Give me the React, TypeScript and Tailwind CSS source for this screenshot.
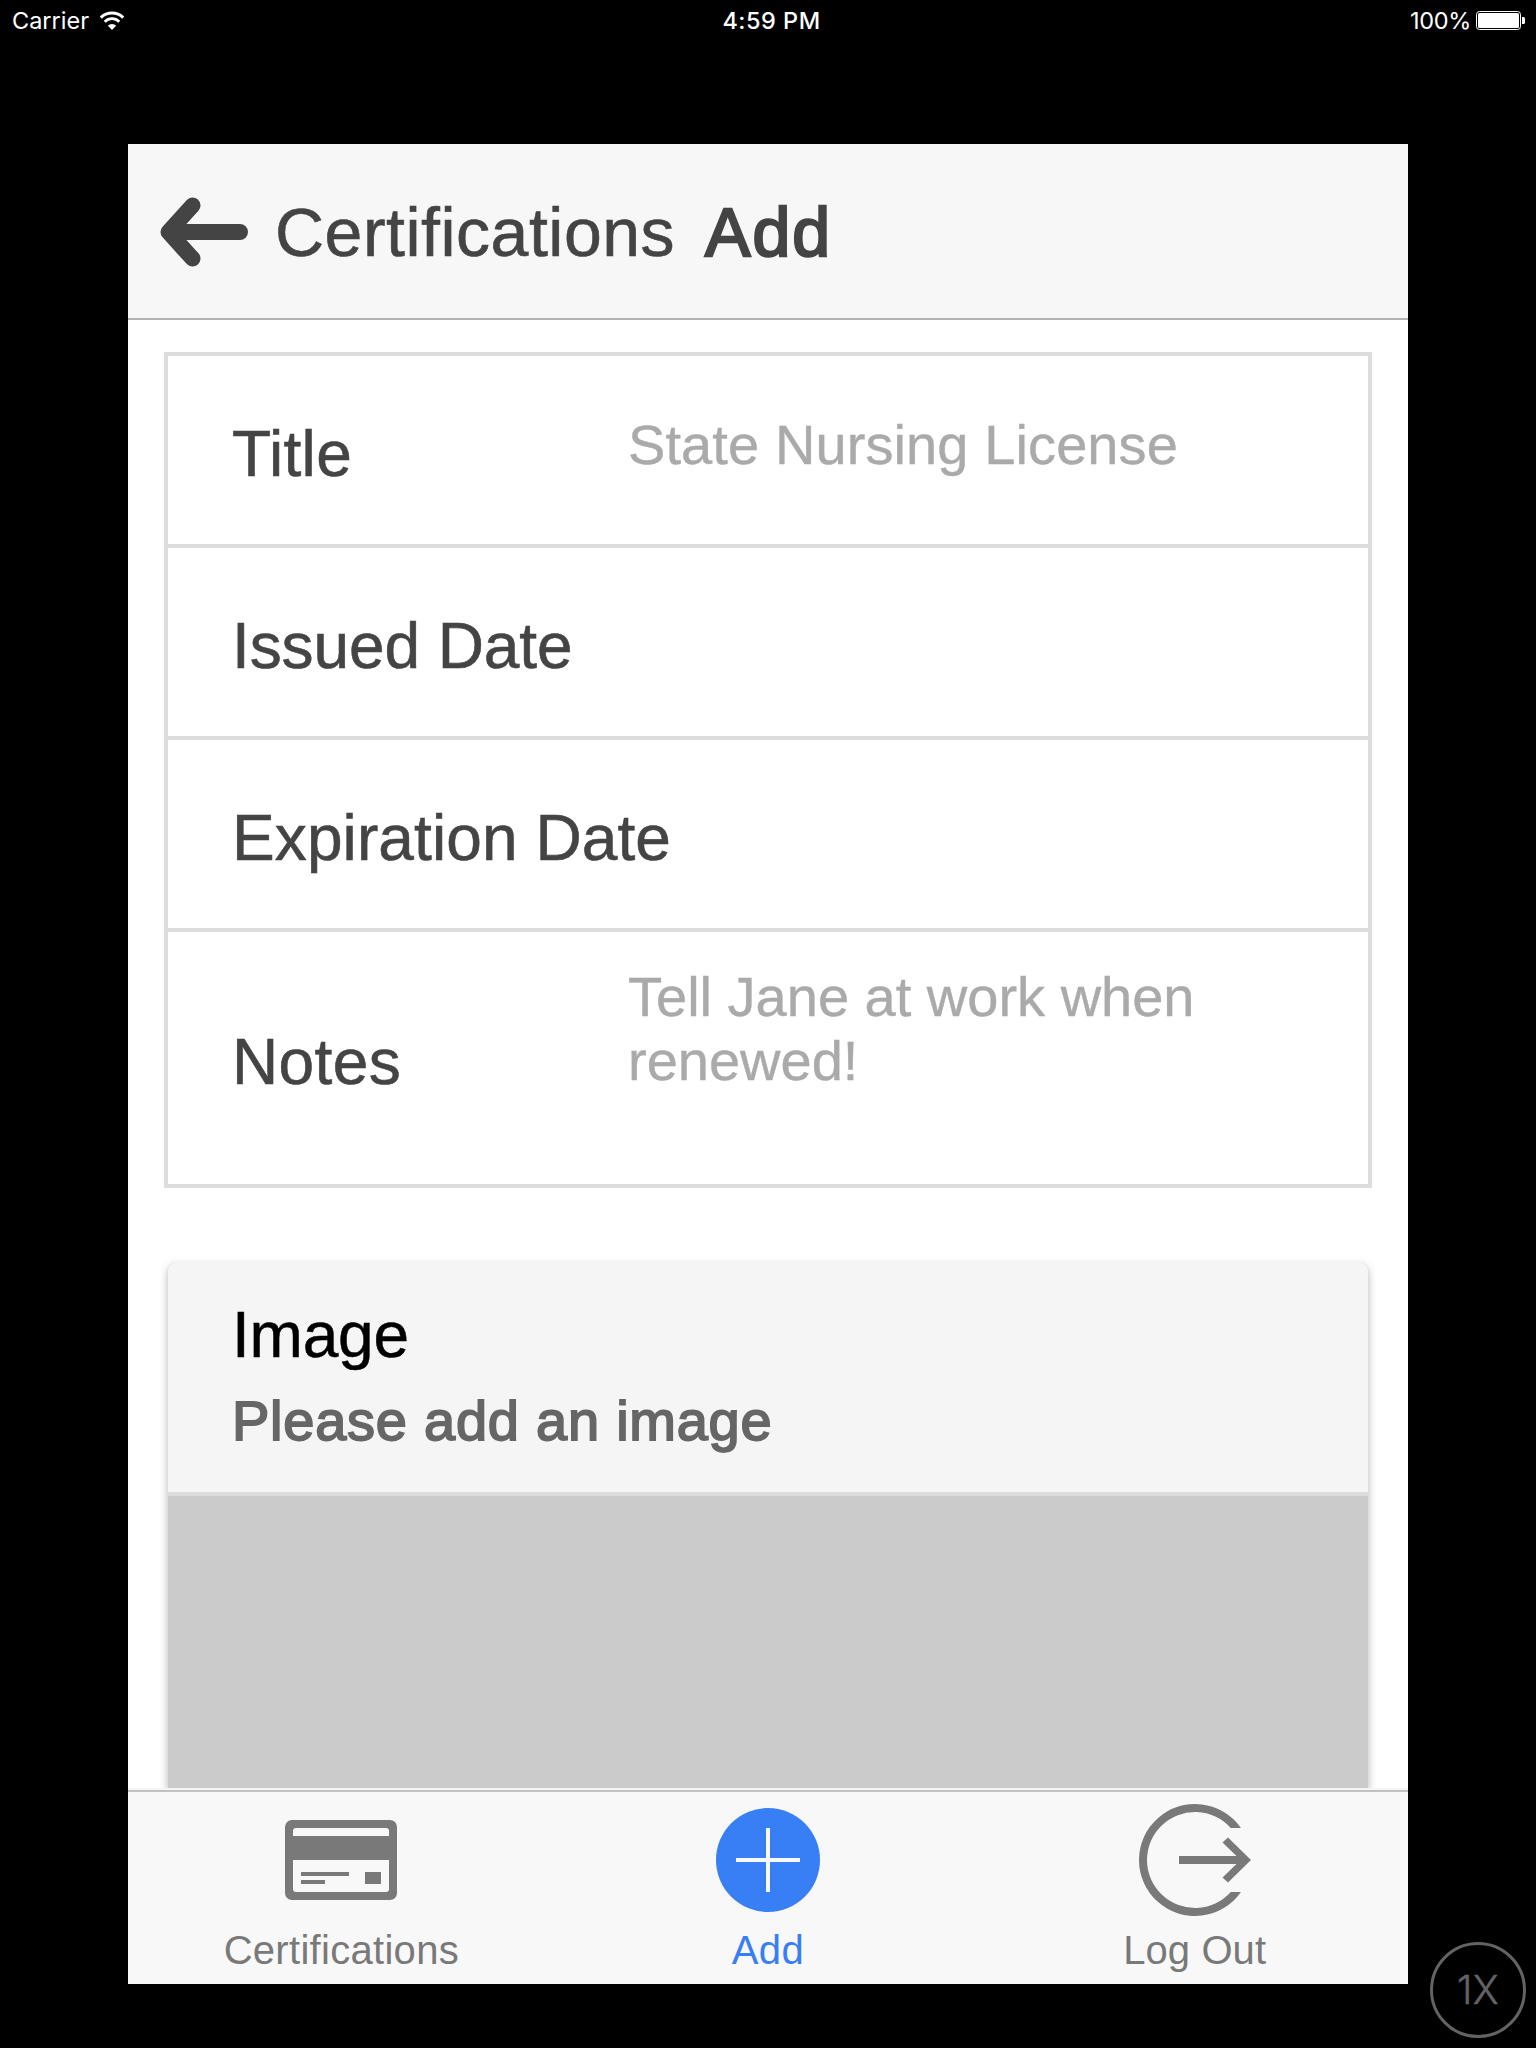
import React from "react";

type RowProps = { label: string; children?: React.ReactNode; className: string };

function Row({ label, children, className }: RowProps) {
  return (
    <div className={"flex border-t-4 border-[#dddddd] pl-16 " + className}>
      <div className="w-[396px] shrink-0 whitespace-nowrap text-[64px] leading-[72px] text-[#444444] [-webkit-text-stroke:0.6px_#444]">{label}</div>
      {children}
    </div>
  );
}

function WifiIcon() {
  return (
    <svg width="26" height="20" viewBox="0 0 26 20" fill="none" className="ml-[10px]">
      <path d="M1.8 6.6A16 16 0 0 1 24.2 6.6" stroke="#fff" strokeWidth="2.9" />
      <path d="M5.7 10.7A10.4 10.4 0 0 1 20.3 10.7" stroke="#fff" strokeWidth="2.7" />
      <path d="M13 19L8.8 14.6A6.2 6.2 0 0 1 17.2 14.6Z" fill="#fff" />
    </svg>
  );
}

function BatteryIcon() {
  return (
    <svg width="49" height="19" viewBox="0 0 49 19" className="ml-[7px]">
      <rect x="0.5" y="0.5" width="44" height="18" rx="3" fill="none" stroke="#fff" />
      <rect x="2" y="2" width="41" height="15" rx="1.5" fill="#fff" />
      <path d="M46 6h1.5a1.5 1.5 0 0 1 1.5 1.5v4a1.5 1.5 0 0 1-1.5 1.5H46z" fill="#fff" />
    </svg>
  );
}

function BackArrow() {
  return (
    <svg width="88" height="70" viewBox="160 197 88 70" fill="none" stroke="#444" strokeWidth="16" strokeLinecap="round" strokeLinejoin="round" className="mt-[2px]">
      <path d="M192.500 205.500L168.500 232L192.500 258.500M170 232H240" />
    </svg>
  );
}

function CardIcon() {
  return (
    <svg width="112" height="80" viewBox="0 0 112 80" fill="#797979">
      <path
        fillRule="evenodd"
        d="M7 0H105a7 7 0 0 1 7 7V73a7 7 0 0 1-7 7H7a7 7 0 0 1-7-7V7a7 7 0 0 1 7-7ZM11 8a3 3 0 0 0-3 3V16H104V11a3 3 0 0 0-3-3ZM8 40V69a3 3 0 0 0 3 3H101a3 3 0 0 0 3-3V40Z"
      />
      <path d="M16 52H64V56H16ZM16 60H40V64H16ZM80 52H96V64H80Z" />
    </svg>
  );
}

function AddIcon() {
  return (
    <svg width="104" height="104" viewBox="0 0 104 104">
      <circle cx="52" cy="52" r="52" fill="#387ef5" />
      <path d="M52 20V84M20 52H84" stroke="#f8f8f8" strokeWidth="4" />
    </svg>
  );
}

function LogOutIcon() {
  return (
    <svg width="112" height="112" viewBox="0 0 112 112" fill="#797979">
      <path d="M101.960 24A56 56 0 1 0 101.960 88H91.780A48 48 0 1 1 91.780 24Z" />
      <path d="M40 52H97.500L83.500 38.500L89 33.500L112 56L89 78.500L83.500 73.500L97.500 60H40Z" />
    </svg>
  );
}

export default function App() {
  return (
    <div className="flex h-[2048px] w-[1536px] flex-col bg-black font-['Liberation_Sans',Arial,sans-serif]">
      <div className="grid h-[41px] grid-cols-3 items-center pr-[11px] pl-3 font-[Inter,sans-serif] text-[23.5px] text-white">
        <div className="flex items-center">
          Carrier
          <WifiIcon />
        </div>
        <div className="pl-[6px] text-center font-medium tracking-[0.5px]">4:59 PM</div>
        <div className="flex items-center justify-end">
          <span className="-mr-[2px] tracking-[-0.3px]">100%</span>
          <BatteryIcon />
        </div>
      </div>

      <div className="mt-[103px] flex h-[1840px] shrink-0">
        <div className="w-32 shrink-0" />
        <main className="flex w-[1280px] shrink-0 flex-col overflow-hidden bg-white">
          <header className="flex h-44 shrink-0 items-center border-b-2 border-[#b2b2b2] bg-[#f7f7f7] pl-8 text-[68px] leading-[80px] text-[#444444]">
            <BackArrow />
            <span className="mt-[2px] ml-[27px] tracking-[0.5px] [-webkit-text-stroke:0.6px_#444]">Certifications</span>
            <span className="mt-[2px] ml-[30px] tracking-[2px] [-webkit-text-stroke:2.4px_#444]">Add</span>
          </header>

          <div className="flex min-h-0 grow flex-col overflow-hidden px-9 pt-8">
            <section className="h-[836px] shrink-0 border-x-4 border-b-4 border-[#dddddd]">
              <Row label="Title" className="h-48 pt-[62px] tracking-[0.3px]">
                <div className="-mt-[5px] text-[56px] leading-[64px] tracking-[0.1px] text-[#aaaaaa] [-webkit-text-stroke:0.4px_#aaa]">State Nursing License</div>
              </Row>
              <Row label="Issued Date" className="h-48 pt-[62px] tracking-[-0.1px]" />
              <Row label="Expiration Date" className="h-48 pt-[62px] tracking-[0.1px]" />
              <Row label="Notes" className="h-64 pt-[94px] tracking-[0.4px]">
                <div className="-mt-[61px] w-[640px] text-[56px] leading-[64px] tracking-normal text-[#aaaaaa] [-webkit-text-stroke:0.4px_#aaa]">
                  Tell Jane at work when
                  <br />
                  renewed!
                </div>
              </Row>
            </section>

            <section className="mx-1 mt-[74px] flex grow flex-col rounded-t-lg bg-[#cbcbcb] shadow-[0_4px_8px_rgba(0,0,0,0.3)]">
              <div className="h-[234px] shrink-0 rounded-t-lg border-b-4 border-[#dddddd] bg-[#f5f5f5] pl-16 pt-[37px]">
                <h2 className="text-[64px] leading-[72px] tracking-[-0.2px] text-black [-webkit-text-stroke:0.5px_#000]">Image</h2>
                <p className="mt-[14px] text-[56px] leading-[72px] tracking-[0.750px] text-[#666666] [-webkit-text-stroke:1.8px_#666]">Please add an image</p>
              </div>
            </section>
          </div>

          <nav className="grid h-[196px] shrink-0 grid-cols-3 border-t-2 border-[#f5f5f5] bg-[#f8f8f8] text-[40px] leading-[48px] text-[#797979]">
            <div className="flex flex-col items-center border-t-2 border-[#c2c2c2]">
              <div className="mt-3 flex h-[112px] items-center"><CardIcon /></div>
              <span className="mt-[10px] tracking-[0.3px]">Certifications</span>
            </div>
            <div className="flex flex-col items-center border-t-2 border-[#c2c2c2] text-[#387ef5]">
              <div className="mt-3 flex h-[112px] items-center"><AddIcon /></div>
              <span className="mt-[10px] tracking-[0.5px]">Add</span>
            </div>
            <div className="flex flex-col items-center border-t-2 border-[#c2c2c2]">
              <div className="mt-3 flex h-[112px] items-center"><LogOutIcon /></div>
              <span className="mt-[10px] tracking-[0.1px]">Log Out</span>
            </div>
          </nav>
        </main>
        <div className="mt-[1798px] ml-[22px] flex size-24 shrink-0 items-center justify-center rounded-full border-[3px] border-[#636366] font-[Inter,sans-serif] text-[39px] font-light tracking-[0.3px] text-[#636366] [-webkit-text-stroke:0.5px_#636366]">
          1X
        </div>
      </div>
    </div>
  );
}
